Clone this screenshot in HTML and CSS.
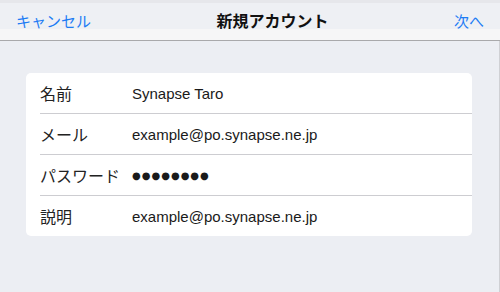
FILE: index.html
```html
<!DOCTYPE html>
<html lang="ja">
<head>
<meta charset="UTF-8">
<meta name="viewport" content="width=device-width, initial-scale=1.0">
<title>新規アカウント</title>
<link rel="stylesheet" href="styles.css">
</head>
<body>
    <div class="navbar">
        <span class="navbtn">キャンセル</span>
        <span class="title">新規アカウント</span>
        <span class="navbtn next">次へ</span>
    </div>
    <div class="content">
        <div class="card">
            <div class="row">
                <span class="label">名前</span>
                <span class="value">Synapse Taro</span>
            </div>
            <div class="row">
                <span class="label">メール</span>
                <span class="value">example@po.synapse.ne.jp</span>
            </div>
            <div class="row">
                <span class="label">パスワード</span>
                <span class="value dots">●●●●●●●●</span>
            </div>
            <div class="row">
                <span class="label">説明</span>
                <span class="value">example@po.synapse.ne.jp</span>
            </div>
        </div>
    </div>
</body>
</html>
```

FILE: styles.css
```css
body{
  margin: 0;
  width: 500px;
  height: 292px;
  overflow: hidden;
  background-color: #eceef3;
  font-family: "Liberation Sans", "Noto Sans CJK JP", sans-serif;
  color: #1a1a1a;
}

.navbar{
  height: 40px;
  display: flex;
  align-items: center;
  justify-content: space-between;
  padding: 0 16px;
  background: linear-gradient(#e6e7eb 0, #e6e7eb 3px, #eef0f4 3px, #eef0f4 29px, #f6f6f7 29px);
  border-bottom: 1px solid #a9a9ab;
}

.navbtn{
  font-family: "Noto Sans CJK JP", sans-serif;
  font-size: 15px;
  color: #1d7cf4;
}

.title{
  font-family: "Noto Sans CJK JP", sans-serif;
  font-size: 16px;
  font-weight: bold;
  color: #111;
}

.content{
  height: 251px;
  padding: 32px 27px 0 26px;
  box-sizing: border-box;
  border-right: 1px solid #cfd0d4;
}

.card{
  background-color: white;
  border-radius: 5px;
}

.row{
  height: 40px;
  display: flex;
  align-items: center;
  margin-left: 14px;
  border-bottom: 1px solid #cdcdd1;
}

.row:last-child{
  border-bottom: none;
}

.label{
  width: 92px;
  font-family: "Noto Sans CJK JP", sans-serif;
  font-size: 16px;
  color: #222;
}

.value{
  font-size: 15px;
  color: #1a1a1a;
}

.dots{
  font-family: "DejaVu Sans", sans-serif;
  font-size: 10px;
  letter-spacing: 1px;
}
```
